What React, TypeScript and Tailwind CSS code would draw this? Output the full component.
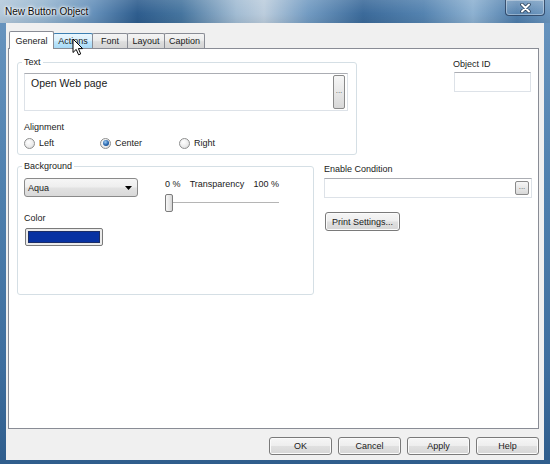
import React from "react";

type TabState = "active" | "hover" | "idle";

function Tab({ label, state, className }: { label: string; state: TabState; className: string }) {
  const base = "flex justify-center border border-b-0 rounded-t-[2px] ";
  const look =
    state === "active"
      ? "relative z-10 -mb-px h-[18px] items-start pt-[3px] bg-white border-[#898c95]"
      : state === "hover"
      ? "h-[15px] -ml-px items-center border-[#3c7fb1] bg-[linear-gradient(180deg,#eaf6fd_0%,#d9f0fc_45%,#bee6fd_55%,#a7d9f5_100%)]"
      : "h-[15px] -ml-px items-center border-[#898c95] bg-[linear-gradient(180deg,#f4f4f4_0%,#ececec_45%,#dedede_55%,#d4d4d4_100%)]";
  return (
    <div className={base + look + " " + className}>
      <span className="leading-[12px]">{label}</span>
    </div>
  );
}

function Radio({ label, checked, className }: { label: string; checked?: boolean; className: string }) {
  return (
    <div className={"flex items-center gap-[4px] " + className}>
      <span className="flex h-[11px] w-[11px] items-center justify-center rounded-full border border-[#8e8f8f] bg-[radial-gradient(circle_at_40%_35%,#ffffff_0%,#ececec_55%,#d2d2d2_100%)]">
        {checked && (
          <span className="h-[6px] w-[6px] rounded-full bg-[radial-gradient(circle_at_40%_35%,#9ccbf2_0%,#2564ad_55%,#0b3b78_100%)]" />
        )}
      </span>
      <span className="leading-[12px]">{label}</span>
    </div>
  );
}

function PushButton({ label, className }: { label: string; className: string }) {
  return (
    <div
      className={
        "flex items-center justify-center rounded-[3px] border border-[#7a7a7a] bg-[linear-gradient(180deg,#f6f6f6_0%,#eeeeee_48%,#e0e0e0_52%,#d6d6d6_100%)] shadow-[inset_0_0_0_1px_#fbfbfb] leading-[12px] " +
        className
      }
    >
      {label}
    </div>
  );
}

function DotsButton({ className }: { className: string }) {
  return (
    <div
      className={
        "flex justify-center rounded-[2px] border border-[#8a8a8a] bg-[linear-gradient(180deg,#f6f6f6_0%,#e8e8e8_50%,#d8d8d8_100%)] text-[8px] leading-[8px] text-[#555] " +
        className
      }
    >
      ...
    </div>
  );
}

function Field({ legend, className, children }: { legend: string; className: string; children: React.ReactNode }) {
  return (
    <fieldset className={"rounded-[3px] border border-[#d5dfe5] pl-[6px] " + className}>
      <legend className="-ml-[2px] px-[2px] leading-[12px]">{legend}</legend>
      {children}
    </fieldset>
  );
}

function Cursor() {
  return (
    <svg className="absolute left-[72px] top-[38px]" width="13" height="19" viewBox="0 0 13 19">
      <path
        d="M1 1 L1 14.5 L4.2 11.4 L6.6 16.8 L8.7 15.9 L6.4 10.6 L10.6 10.6 Z"
        fill="#ffffff"
        stroke="#000000"
        strokeWidth="1"
        strokeLinejoin="round"
      />
    </svg>
  );
}

export default function App() {
  return (
    <div className="relative flex h-[464px] w-[550px] flex-col overflow-hidden bg-[linear-gradient(180deg,#6a96c0_0%,#4f80ae_40%,#3d6d9d_80%,#2f5d8c_100%)] font-['Liberation_Sans',Arial,sans-serif] text-[9px] text-[#1a1a1a]">
      {/* title bar */}
      <div className="flex h-[23px] shrink-0 items-start justify-between bg-[linear-gradient(180deg,rgba(255,255,255,0.12)_0%,rgba(255,255,255,0)_60%,rgba(0,0,0,0.06)_100%),linear-gradient(90deg,#b4c9db_0%,#97b6d0_8%,#6590ba_17%,#2e5d8e_25%,#46759f_33%,#a2bcd3_43%,#bccddd_48%,#729bc2_56%,#3b6a9a_66%,#5483b0_77%,#8db1d1_86%,#4e7dab_94%,#6b96bf_100%)]">
        <span className="ml-[5px] mt-[5px] text-[10px] leading-[13px] text-[#0c0c0c] [text-shadow:0_0_5px_#ffffff,0_0_3px_#ffffff,0_0_2px_#ffffff]">
          New Button Object
        </span>
        <div className="mr-[5px] flex h-[16px] w-[40px] items-center justify-center rounded-b-[4px] border border-t-0 border-[rgba(25,45,75,0.7)] bg-[linear-gradient(180deg,rgba(255,255,255,0.18),rgba(255,255,255,0.04))] shadow-[inset_0_0_0_1px_rgba(255,255,255,0.35)]">
          <svg width="11" height="10" viewBox="0 0 11 10">
            <path d="M2 1.5 L9 8.5 M9 1.5 L2 8.5" stroke="#2b405a" strokeWidth="3.6" strokeLinecap="round" />
            <path d="M2 1.5 L9 8.5 M9 1.5 L2 8.5" stroke="#ffffff" strokeWidth="2" strokeLinecap="round" />
          </svg>
        </div>
      </div>

      {/* client area */}
      <div className="mx-[6px] mb-[4px] flex flex-1 flex-col bg-[#f0f0f0] pl-[2px] pr-[5px] pt-[8px]">
        {/* tab strip */}
        <div className="ml-[1px] flex h-[17px] items-end">
          <Tab label="General" state="active" className="w-[45px]" />
          <Tab label="Actions" state="hover" className="w-[40px]" />
          <Tab label="Font" state="idle" className="w-[36px]" />
          <Tab label="Layout" state="idle" className="w-[38px]" />
          <Tab label="Caption" state="idle" className="w-[41px]" />
        </div>

        {/* tab page */}
        <div className="flex h-[381px] flex-col border border-[#898c95] bg-white pl-[8px] pt-[7px]">
          <div className="flex items-start">
            <Field legend="Text" className="w-[340px] pb-[5px] pr-[8px]">
              <div className="mt-[5px] flex h-[38px] border border-[#dde2e8] border-t-[#abadb3]">
                <span className="flex-1 pl-[6px] pt-[2px] text-[10.5px] leading-[14px]">Open Web page</span>
                <DotsButton className="my-[1px] mr-[2px] w-[12px] items-center pb-[2px]" />
              </div>
              <div className="mt-[10px] leading-[12px]">Alignment</div>
              <div className="mt-[4px] flex h-[12px] items-center">
                <Radio label="Left" className="w-[76px]" />
                <Radio label="Center" checked className="w-[79px]" />
                <Radio label="Right" className="" />
              </div>
            </Field>

            <div className="ml-[97px] mt-[2px] flex w-[77px] flex-col">
              <span className="-ml-px leading-[12px]">Object ID</span>
              <div className="mt-[2px] h-[20px] border border-[#dde2e8] border-t-[#abadb3] bg-white" />
            </div>
          </div>

          <div className="mt-[5px] flex items-start">
            <Field legend="Background" className="w-[297px] pb-[48px]">
              <div className="flex items-start">
                <div className="flex w-[114px] flex-col">
                  <div className="mt-[6px] flex h-[19px] items-center justify-between rounded-[3px] border border-[#8a8a8a] bg-[linear-gradient(180deg,#f6f6f6_0%,#eeeeee_48%,#e2e2e2_52%,#d9d9d9_100%)] pl-[3px] pr-[5px]">
                    <span className="leading-[12px]">Aqua</span>
                    <svg width="7" height="4" viewBox="0 0 7 4">
                      <path d="M0 0 L7 0 L3.5 4 Z" fill="#000000" />
                    </svg>
                  </div>
                  <span className="mt-[15px] leading-[12px]">Color</span>
                  <div className="ml-px mt-[4px] h-[18px] w-[78px] rounded-[2px] border border-[#7a7a7a] bg-[#ebebeb] p-[2px]">
                    <div className="h-full w-full border border-[#1b2d66] bg-[#0832a2]" />
                  </div>
                </div>

                <div className="ml-[27px] mt-[6px] flex w-[114px] flex-col">
                  <div className="flex h-[12px] items-center justify-between leading-[12px]">
                    <span>0 %</span>
                    <span>Transparency</span>
                    <span>100 %</span>
                  </div>
                  <div className="relative mt-[4px] h-[18px] w-[114px]">
                    <div className="absolute left-0 right-0 top-[8px] h-[2px] border-t border-[#b5b5b5] border-b-white" />
                    <div className="absolute left-0 top-0 h-[18px] w-[8px] rounded-[2px] border border-[#7c7c7c] bg-[linear-gradient(90deg,#f7f7f7_0%,#e6e6e6_60%,#d4d4d4_100%)]" />
                  </div>
                </div>
              </div>
            </Field>

            <div className="ml-[10px] mt-[3px] flex w-[208px] flex-col">
              <span className="leading-[12px]">Enable Condition</span>
              <div className="mt-[3px] flex h-[20px] justify-end border border-[#dde2e8] border-t-[#abadb3] bg-white">
                <DotsButton className="my-[2px] mr-[2px] w-[14px] items-end pb-[3px]" />
              </div>
              <PushButton label="Print Settings..." className="ml-px mt-[14px] h-[19px] w-[75px]" />
            </div>
          </div>
        </div>

        {/* dialog buttons */}
        <div className="mt-[8px] flex justify-end gap-[6px]">
          <PushButton label="OK" className="h-[18px] w-[63px]" />
          <PushButton label="Cancel" className="h-[18px] w-[63px]" />
          <PushButton label="Apply" className="h-[18px] w-[63px]" />
          <PushButton label="Help" className="h-[18px] w-[63px]" />
        </div>
      </div>

      <Cursor />
    </div>
  );
}
